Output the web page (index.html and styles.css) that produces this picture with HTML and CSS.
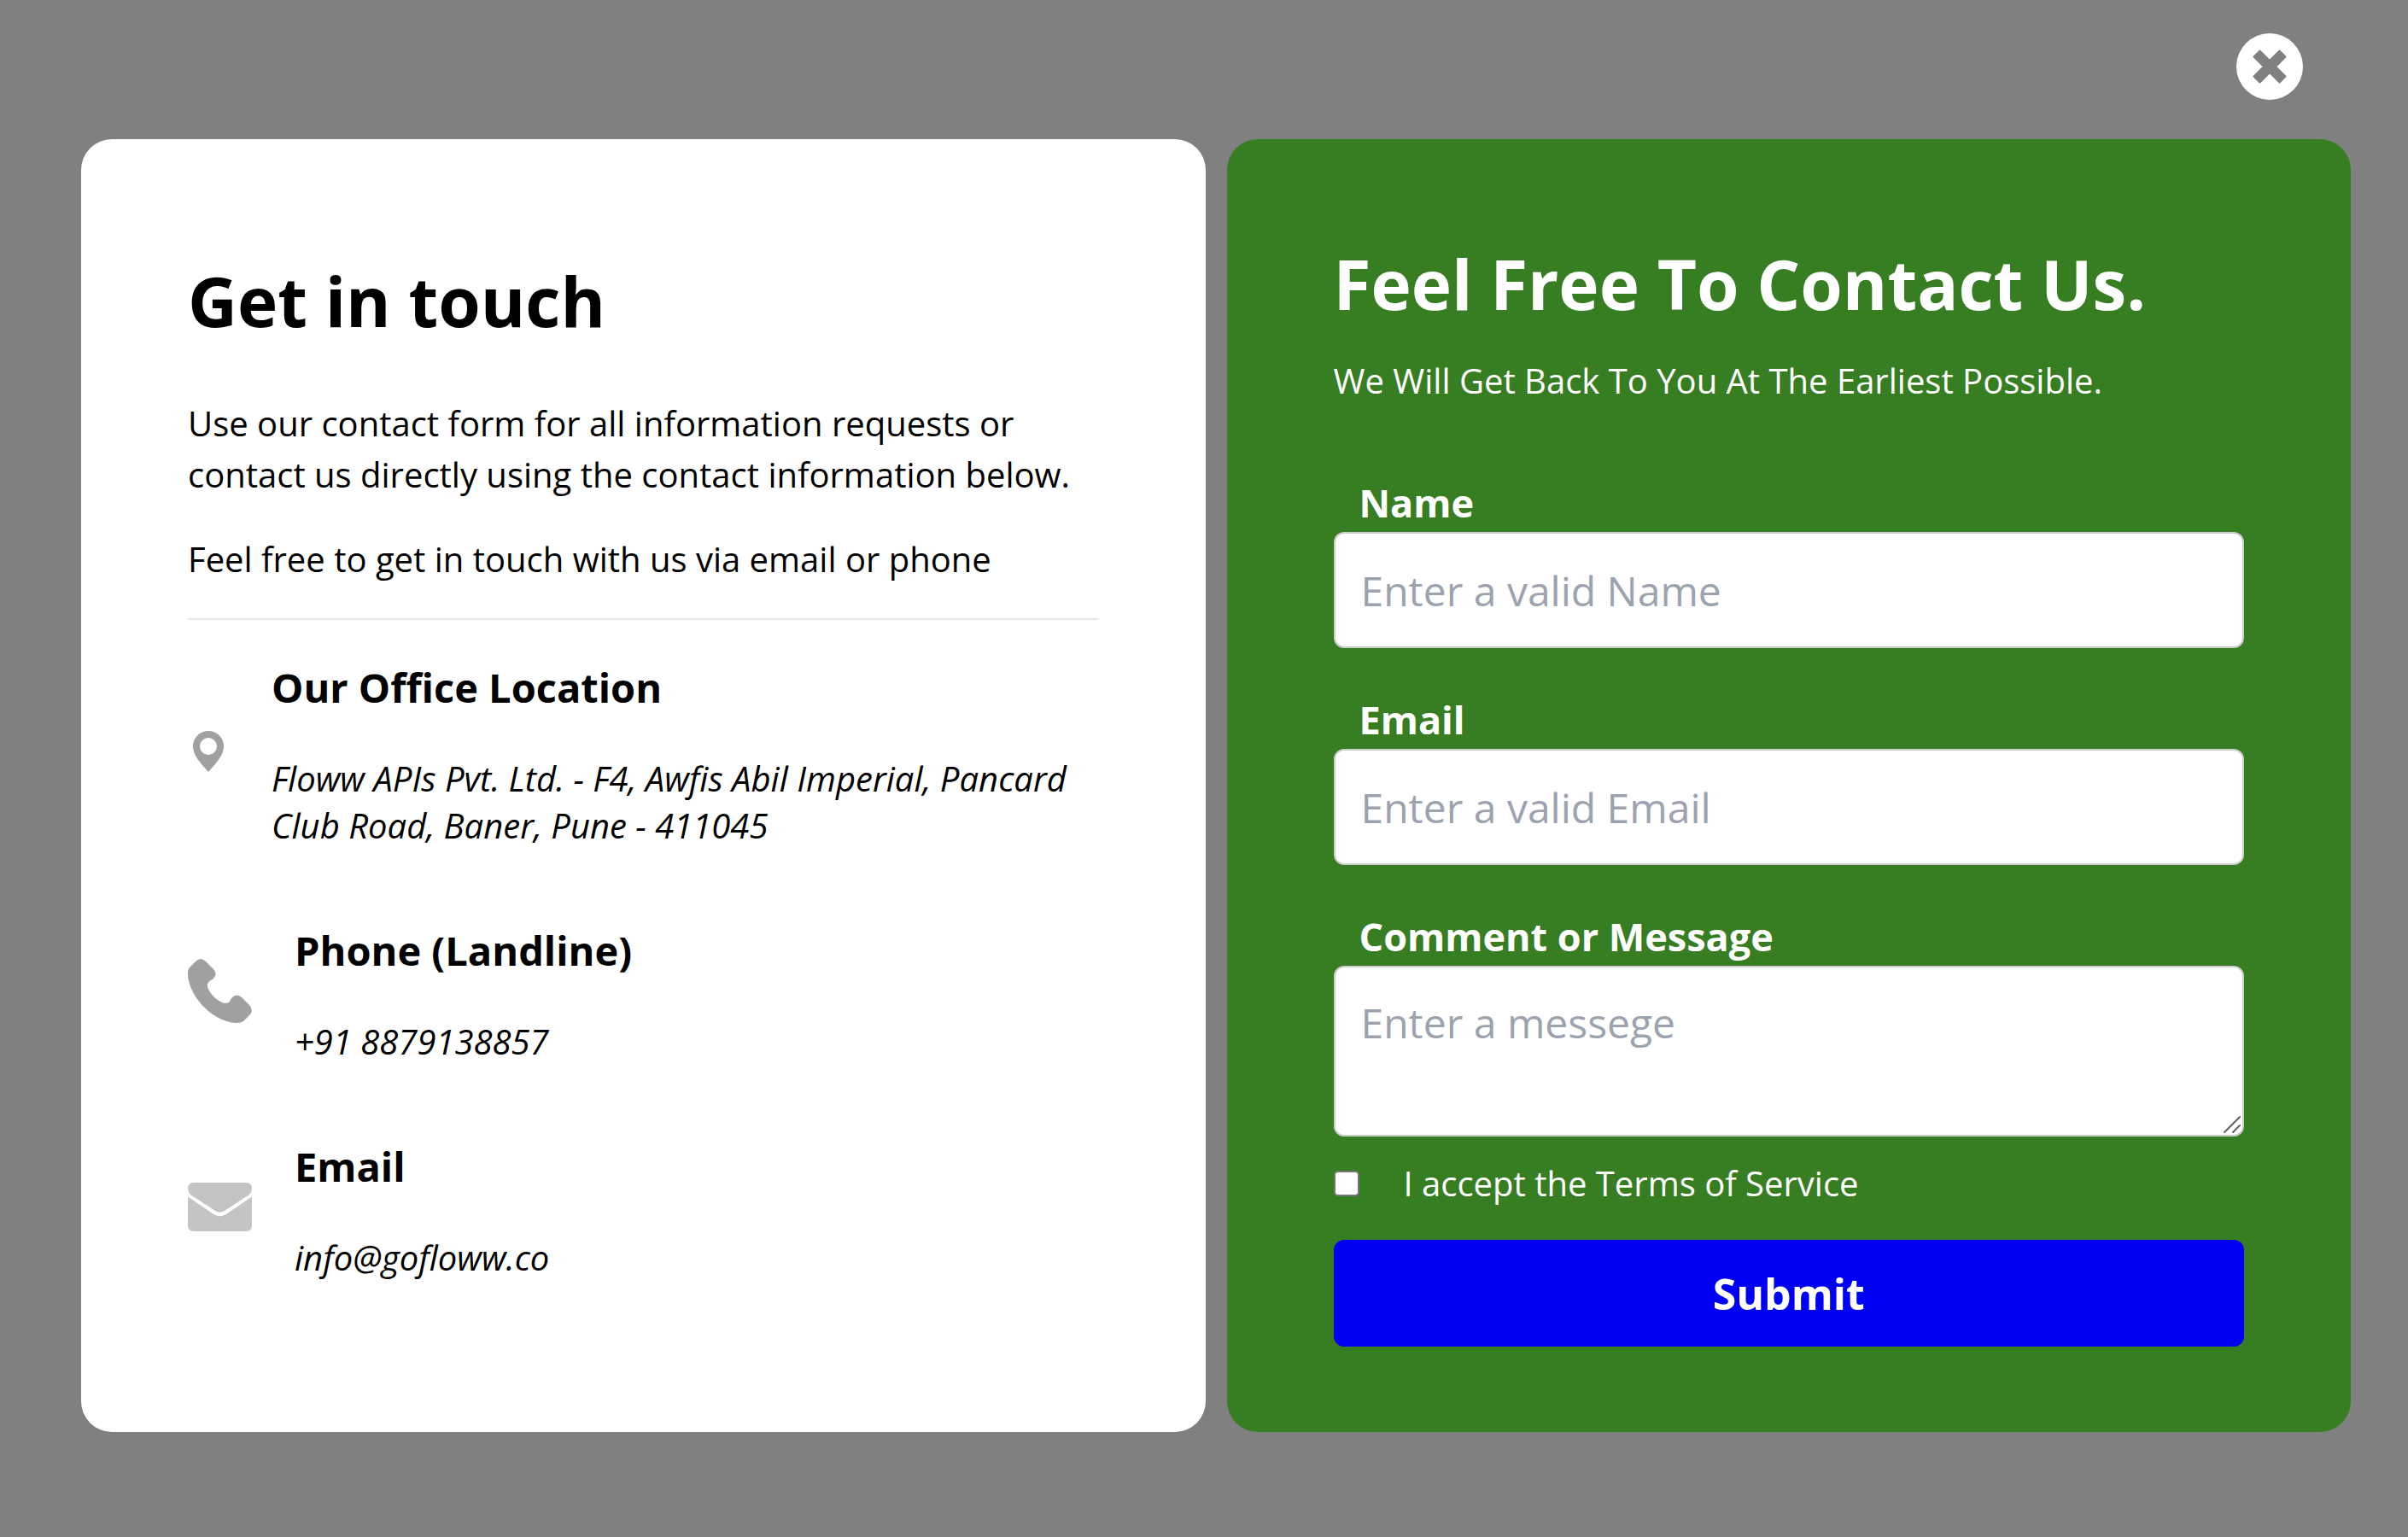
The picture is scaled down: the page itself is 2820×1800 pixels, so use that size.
FILE: index.html
```html
<!DOCTYPE html>
<html lang="en">
<head>
<meta charset="utf-8">
<meta name="viewport" content="width=device-width, initial-scale=1">
<title>Contact us</title>
<link rel="stylesheet" href="styles.css">
</head>
<body>
<main class="overlay">
  <div class="toolbar">
    <button class="close" type="button" aria-label="Close">
      <svg class="close-icon" viewBox="0 0 78 78" aria-hidden="true">
        <circle cx="39" cy="39" r="39" fill="#fff"/>
        <path d="M27.500 20.500 39 32 50.500 20.500 57.500 27.500 46 39 57.500 50.500 50.500 57.500 39 46 27.500 57.500 20.500 50.500 32 39 20.500 27.500Z" fill="#808080" stroke="#808080" stroke-width="2" stroke-linejoin="round"/>
      </svg>
    </button>
  </div>
  <div class="cards">
    <section class="card info">
      <h1 class="title">Get in touch</h1>
      <p class="intro">Use our contact form for all information requests or contact us directly using the contact information below.</p>
      <p class="intro">Feel free to get in touch with us via email or phone</p>
      <hr class="rule">
      <div class="contacts">
        <div class="contact">
          <svg class="pin-icon" viewBox="0 0 48 50" aria-hidden="true">
            <path d="M24 1C14 1 6 9 6 19C6 30 16 40 24 49C32 40 42 30 42 19C42 9 34 1 24 1ZM24 9A10 10 0 1 1 24 29A10 10 0 1 1 24 9Z" fill="#a0a0a0" fill-rule="evenodd"/>
          </svg>
          <div>
            <h2 class="contact-title">Our Office Location</h2>
            <address class="contact-text">Floww APIs Pvt. Ltd. - F4, Awfis Abil Imperial, Pancard Club Road, Baner, Pune - 411045</address>
          </div>
        </div>
        <div class="contact">
          <svg class="icon" viewBox="0 0 75 75" aria-hidden="true">
            <path d="M9 3Q15-3 21 3L30 12Q35 18 30 23L27 25Q22 28 23 33C26 41 33 48 41 51.500Q48 53 50 48L52 45Q57 40 63 45L72 54Q77 60 73 65L65 73Q62 75 57 75C31 75 0 44 0 17Q0 12 2 10Z" fill="#a0a0a0"/>
          </svg>
          <div>
            <h2 class="contact-title">Phone (Landline)</h2>
            <address class="contact-text">+91 8879138857</address>
          </div>
        </div>
        <div class="contact">
          <svg class="icon" viewBox="0 0 75 57" aria-hidden="true">
            <path d="M7 0H68Q75 0 75 7Q75 11 72 14L43 33Q37.500 36.500 32 33L3 14Q0 11 0 7Q0 0 7 0ZM0 16.500 31 37.500Q37.500 41 44 37.500L75 16.500V50Q75 57 68 57H7Q0 57 0 50Z" fill="#c4c4c4"/>
          </svg>
          <div>
            <h2 class="contact-title">Email</h2>
            <address class="contact-text">info@gofloww.co</address>
          </div>
        </div>
      </div>
    </section>
    <section class="card form-card">
      <h1 class="title">Feel Free To Contact Us.</h1>
      <p class="subtitle">We Will Get Back To You At The Earliest Possible.</p>
      <form class="form">
        <div class="field">
          <label class="label" for="name">Name</label>
          <input class="input" id="name" type="text" placeholder="Enter a valid Name">
        </div>
        <div class="field">
          <label class="label" for="email">Email</label>
          <input class="input" id="email" type="email" placeholder="Enter a valid Email">
        </div>
        <div class="field">
          <label class="label" for="message">Comment or Message</label>
          <div class="message-box">
            <textarea class="input message" id="message" placeholder="Enter a messege"></textarea>
            <svg class="grip" viewBox="0 0 24 24" aria-hidden="true">
              <path d="M3 21 21 3M13 21 21 13" stroke="#606060" stroke-width="2" stroke-linecap="round"/>
            </svg>
          </div>
        </div>
        <div class="terms">
          <input class="checkbox" id="terms" type="checkbox">
          <label for="terms">I accept the Terms of Service</label>
        </div>
        <button class="submit" type="submit">Submit</button>
      </form>
    </section>
  </div>
</main>
</body>
</html>
```
FILE: styles.css
```css
*, *::before, *::after { box-sizing: border-box; }

body {
  margin: 0;
  background: #808080;
  color: #000;
  font-family: "Open Sans", sans-serif;
  font-size: 40px;
  line-height: 60px;
}

h1, h2, p { margin: 0; }

.overlay { padding: 39px 67px 60px 95px; }

.toolbar {
  display: flex;
  justify-content: flex-end;
  padding: 0 56px 46px 0;
}

.close {
  width: 78px;
  height: 78px;
  padding: 0;
  border: 0;
  border-radius: 50%;
  background: none;
  cursor: pointer;
}

.close-icon { display: block; width: 100%; }

.cards {
  display: grid;
  grid-template-columns: 1fr 1fr;
  gap: 25px;
}

.card { border-radius: 36px; }

.info { padding: 125px; background: #fff; }

.form-card {
  padding: 105px 125px 100px;
  background: #377e22;
  color: #fff;
}

.title {
  font-size: 80px;
  font-weight: 700;
  line-height: 128px;
}

.info .title { margin-bottom: 50px; }

.intro { margin-bottom: 39px; }

.rule {
  height: 2px;
  margin: 0 0 40px;
  border: 0;
  background: #e5e7eb;
}

.contacts {
  display: flex;
  flex-direction: column;
  gap: 80px;
}

.contact {
  display: flex;
  align-items: center;
  gap: 50px;
}

.icon { flex: none; width: 75px; }

.pin-icon { flex: none; width: 48px; }

.contact-title {
  margin-bottom: 40px;
  font-size: 47px;
  font-weight: 700;
  line-height: 78px;
}

.contact-text { line-height: 55px; }

.form-card .title { margin-bottom: 20px; }

.subtitle { margin-bottom: 79px; }

.form { display: flex; flex-direction: column; }

.field { margin-bottom: 50px; }

.field:nth-of-type(3) { margin-bottom: 25px; }

.label {
  display: block;
  padding-left: 30px;
  font-size: 45px;
  font-weight: 700;
  line-height: 68px;
}

.input {
  display: block;
  width: 100%;
  height: 136px;
  padding: 0 30px;
  border: 2px solid #ccc;
  border-radius: 12px;
  background: #fff;
  color: #000;
  font: inherit;
  font-size: 48px;
}

.input::placeholder { color: #9ca3af; opacity: 1; }

.message-box { position: relative; }

.message {
  height: 200px;
  padding: 30px;
  line-height: 70px;
  resize: none;
}

.grip {
  position: absolute;
  right: 2px;
  bottom: 2px;
  width: 24px;
  height: 24px;
  fill: none;
}

.terms {
  display: flex;
  align-items: center;
  gap: 52px;
  margin-bottom: 36px;
}

.checkbox {
  width: 30px;
  height: 30px;
  margin: 0;
  border: 2px solid #767676;
  border-radius: 5px;
  background: #fff;
  appearance: none;
}

.checkbox:checked { background: #0000f5; }

.submit {
  height: 125px;
  border: 0;
  border-radius: 12px;
  background: #0000f5;
  color: #fff;
  font: inherit;
  font-size: 50px;
  font-weight: 700;
  cursor: pointer;
}
```
